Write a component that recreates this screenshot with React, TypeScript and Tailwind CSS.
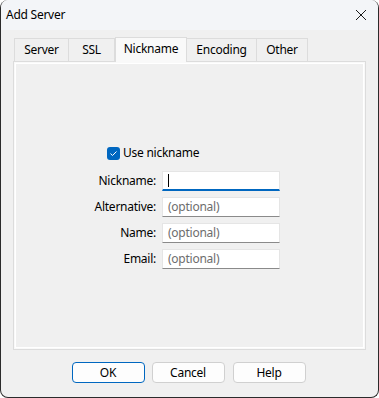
import React from 'react';

const tabs = ['Server', 'SSL', 'Nickname', 'Encoding', 'Other'];
const tabWidths = [55, 46, 72, 70, 51];

const fields = [
  { label: 'Nickname:', placeholder: '', focused: true },
  { label: 'Alternative:', placeholder: '(optional)', focused: false },
  { label: 'Name:', placeholder: '(optional)', focused: false },
  { label: 'Email:', placeholder: '(optional)', focused: false },
];

export default function App() {
  return (
    <div
      className="w-[379px] h-[398px] bg-[#f0f0f0] flex flex-col rounded-t-[8px] rounded-b-[8px] border-x border-b border-[#2b2b2b] overflow-hidden text-[12px] tracking-[-0.25px] text-black"
      style={{ fontFamily: '"Noto Sans", "Liberation Sans", sans-serif' }}
    >
      {/* title bar */}
      <div className="h-[30px] bg-[#f3f5f8] flex items-center justify-between pl-[5px] pr-[10px] shrink-0">
        <span className="text-[12px] leading-none">Add Server</span>
        <svg width="12" height="12" viewBox="0 0 12 12" className="mr-[1px]">
          <path d="M1 1 L11 11 M11 1 L1 11" stroke="#1a1a1a" strokeWidth="1" fill="none" />
        </svg>
      </div>

      <div className="flex flex-col px-[12px] pt-[7px]">
        {/* tabs */}
        <div className="flex items-end h-[24px] pl-[1px]">
          {tabs.map((t, i) => {
            const active = t === 'Nickname';
            return (
              <div
                key={t}
                style={{ width: tabWidths[i] }}
                className={
                  active
                    ? 'h-[25px] -mb-[1px] bg-[#f9f9f9] border-x border-t border-[#dcdcdc] flex items-center justify-center pb-[2px] relative z-10'
                    : 'h-[23px] bg-[#f0f0f0] border-t border-r border-[#dcdcdc] first:border-l flex items-center justify-center'
                }
              >
                <span className="leading-none">{t}</span>
              </div>
            );
          })}
        </div>

        {/* panel */}
        <div className="h-[289px] border border-[#dcdcdc] bg-[#f9f9f9] p-[1px]">
          <div className="h-full bg-[#f0f0f0] border border-white flex flex-col">
            <div className="flex items-center ml-[91px] mt-[82px] h-[14px]">
              <div className="w-[13px] h-[13px] rounded-[3px] bg-[#0067c0] flex items-center justify-center">
                <svg width="9" height="9" viewBox="0 0 9 9">
                  <path d="M1.5 4.6 L3.5 6.5 L7.5 2.5" stroke="white" strokeWidth="1" fill="none" />
                </svg>
              </div>
              <span className="ml-[3px] leading-none">Use nickname</span>
            </div>

            <div className="grid grid-cols-[60px_118px] gap-x-[6px] gap-y-[6px] ml-[80px] mt-[11px]">
              {fields.map((f) => (
                <React.Fragment key={f.label}>
                  <div className="h-[20px] flex items-center justify-end leading-none">{f.label}</div>
                  <div
                    className={
                      f.focused
                        ? 'h-[20px] bg-white border border-[#e5e5e5] border-b-2 border-b-[#0067c0] flex items-center pl-[5px]'
                        : 'h-[20px] bg-white border border-[#e5e5e5] border-b-[#8a8a8a] flex items-center pl-[5px]'
                    }
                  >
                    {f.focused ? (
                      <div className="w-[1px] h-[13px] bg-black" />
                    ) : (
                      <span className="text-[#6d6d6d] leading-none">{f.placeholder}</span>
                    )}
                  </div>
                </React.Fragment>
              ))}
            </div>
          </div>
        </div>

        {/* buttons */}
        <div className="flex justify-center gap-[7px] mt-[12px] pr-[2px]">
          <button className="w-[73px] h-[21px] rounded-[4px] bg-[#fdfdfd] border border-[#0067c0] leading-none">OK</button>
          <button className="w-[73px] h-[21px] rounded-[4px] bg-[#fdfdfd] border border-[#d0d0d0] leading-none">Cancel</button>
          <button className="w-[73px] h-[21px] rounded-[4px] bg-[#fdfdfd] border border-[#d0d0d0] leading-none ml-[1px]">Help</button>
        </div>
      </div>
    </div>
  );
}
